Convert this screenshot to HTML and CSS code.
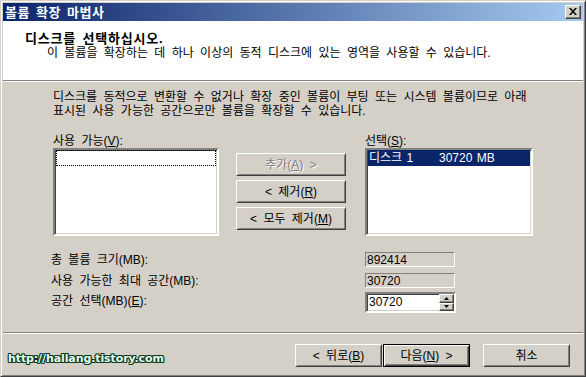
FILE: index.html
```html
<!DOCTYPE html>
<html lang="ko">
<head>
<meta charset="utf-8">
<title>볼륨 확장 마법사</title>
<link rel="stylesheet" href="styles.css">
</head>
<body>
<div class="window">
  <div class="titlebar">
    <span class="title">볼륨 확장 마법사</span>
    <span class="close"><svg width="8" height="7" viewBox="0 0 8 7"><path d="M0 0h2l2 2.4L6 0h2L5 3.5 8 7H6L4 4.6 2 7H0l3-3.5z" fill="#000"/></svg></span>
  </div>
  <div class="header">
    <div class="h-title">디스크를 선택하십시오.</div>
    <div class="h-sub">이 볼륨을 확장하는 데 하나 이상의 동적 디스크에 있는 영역을 사용할 수 있습니다.</div>
  </div>
  <div class="body">
    <p class="desc">디스크를 동적으로 변환할 수 없거나 확장 중인 볼륨이 부팅 또는 시스템 볼륨이므로 아래<br>표시된 사용 가능한 공간으로만 볼륨을 확장할 수 있습니다.</p>
    <div class="pickers">
      <div class="col">
        <div class="lbl">사용 가능(<u>V</u>):</div>
        <div class="list list-left"><div class="item focus"></div></div>
      </div>
      <div class="btns">
        <div class="btn disabled">추가(<u>A</u>) &gt;</div>
        <div class="btn">&lt; 제거(<u>R</u>)</div>
        <div class="btn">&lt; 모두 제거(<u>M</u>)</div>
      </div>
      <div class="col col-right">
        <div class="lbl">선택(<u>S</u>):</div>
        <div class="list list-right"><div class="item sel"><span class="c1">디스크 1</span><span>30720 MB</span></div></div>
      </div>
    </div>
    <div class="fields">
      <div class="frow frow1">
        <div class="flabel">총 볼륨 크기(MB):</div>
        <div class="ro">892414</div>
      </div>
      <div class="frow frow2">
        <div class="flabel">사용 가능한 최대 공간(MB):</div>
        <div class="ro">30720</div>
      </div>
      <div class="frow frow3">
        <div class="flabel">공간 선택(MB)(<u>E</u>):</div>
        <div class="spin">
          <span class="spin-val">30720</span>
          <div class="spinbtns">
            <span class="sb"><svg width="5" height="3" viewBox="0 0 5 3"><path d="M2.5 0L5 3H0z" fill="#000"/></svg></span>
            <span class="sb"><svg width="5" height="3" viewBox="0 0 5 3"><path d="M0 0h5L2.5 3z" fill="#000"/></svg></span>
          </div>
        </div>
      </div>
    </div>
  </div>
  <div class="footer">
    <div class="btn fbtn">&lt; 뒤로(<u>B</u>)</div>
    <div class="btn fbtn default">다음(<u>N</u>) &gt;</div>
    <div class="btn fbtn cancel">취소</div>
  </div>
  <div class="watermark">http://hallang.tistory.com</div>
</div>
</body>
</html>
```
FILE: styles.css
```css
* { box-sizing: border-box; }
html, body { margin: 0; padding: 0; }
body {
  background: #d4d0c8;
  font-family: "Liberation Sans", "Noto Sans CJK KR", sans-serif;
  font-size: 12px;
  color: #000;
  letter-spacing: 0;
  word-spacing: 3px;
}
u { text-decoration: underline; text-underline-offset: 1px; }

.window {
  position: relative;
  width: 586px;
  height: 377px;
  background: #d4d0c8;
  border: 1px solid;
  border-color: #d4d0c8 #404040 #404040 #d4d0c8;
  box-shadow: inset 1px 1px #fff, inset -1px -1px #808080;
  padding: 2px;
  display: flex;
  flex-direction: column;
}

.titlebar {
  height: 18px;
  background: linear-gradient(to right, #0a246a, #a6caf0);
  display: flex;
  align-items: center;
  justify-content: space-between;
  padding: 0 2px 0 2px;
}
.title {
  color: #fff;
  font-weight: bold;
  font-size: 13px;
  letter-spacing: 0.5px;
  word-spacing: 2px;
  line-height: 18px;
  padding-top: 1px;
}
.close {
  width: 16px;
  height: 14px;
  background: #d4d0c8;
  border: 1px solid;
  border-color: #fff #404040 #404040 #fff;
  box-shadow: inset -1px -1px #808080;
  display: flex;
  align-items: center;
  justify-content: center;
  padding: 0 1px 1px 0;
}
.close svg { display: block; }

.header {
  height: 60px;
  background: #fff;
  border-bottom: 1px solid #808080;
  padding: 10px 0 0 22px;
}
.h-title {
  font-weight: bold;
  font-size: 13px;
  line-height: 15px;
  letter-spacing: 0.8px;
  word-spacing: 2px;
}
.h-sub {
  line-height: 14px;
  margin: 0 0 0 22px;
}

.body {
  height: 251px;
  border-top: 1px solid #fff;
  padding: 8px 0 0 50px;
}
.desc {
  margin: 0;
  line-height: 14px;
}
.pickers {
  display: flex;
  margin-top: 16px;
}
.lbl { line-height: 14px; }
.list {
  margin-top: 0;
  height: 88px;
  background: #fff;
  border: 2px solid;
  border-color: #808080 #fff #fff #808080;
  box-shadow: inset 1px 1px #404040, inset -1px -1px #d4d0c8;
  padding: 0 1px;
}
.list-left { width: 166px; }
.list-right { width: 168px; }
.item {
  height: 16px;
  line-height: 16px;
}
.focus {
  border: 1px dotted #000;
}
.sel {
  background: #0a246a;
  color: #fff;
  display: flex;
  padding-left: 1px;
  word-spacing: 1px;
}
.c1 { width: 70px; }

.btns {
  display: flex;
  flex-direction: column;
  gap: 4px;
  margin-left: 17px;
  padding-top: 19px;
  width: 110px;
}
.col-right { margin-left: 19px; }

.btn {
  height: 23px;
  background: #d4d0c8;
  border: 1px solid;
  border-color: #fff #404040 #404040 #fff;
  box-shadow: inset 1px 1px #d4d0c8, inset -1px -1px #808080;
  display: flex;
  align-items: center;
  justify-content: center;
  line-height: 14px;
}
.btn.disabled {
  color: #808080;
  text-shadow: 1px 1px #fff;
}

.fields { margin-left: -2px; }
.frow {
  display: flex;
  align-items: center;
}
.flabel {
  width: 314px;
  line-height: 14px;
}
.frow1 { margin-top: 16px; height: 15px; }
.frow2 { margin-top: 6px; height: 15px; }
.frow3 { margin-top: 4px; height: 21px; }
.frow3 .flabel { padding-bottom: 3px; }
.ro {
  width: 90px;
  height: 15px;
  border: 1px solid;
  border-color: #808080 #fff #fff #808080;
  line-height: 14px;
  padding-left: 1px;
}
.spin {
  width: 91px;
  height: 21px;
  background: #fff;
  border: 2px solid;
  border-color: #808080 #fff #fff #808080;
  box-shadow: inset 1px 1px #404040, inset -1px -1px #d4d0c8;
  display: flex;
  justify-content: space-between;
  padding: 0 0 0 2px;
}
.spin-val { line-height: 17px; }
.spinbtns {
  width: 15px;
  display: flex;
  flex-direction: column;
}
.sb {
  flex: 1;
  background: #d4d0c8;
  border: 1px solid;
  border-color: #fff #404040 #404040 #fff;
  box-shadow: inset -1px -1px #808080;
  display: flex;
  align-items: center;
  justify-content: center;
}
.sb svg { display: block; }

.footer {
  height: 42px;
  border-top: 1px solid #808080;
  box-shadow: inset 0 1px #fff;
  display: flex;
  justify-content: flex-end;
  padding: 11px 13px 0 0;
  gap: 1px;
}
.fbtn { width: 87px; }
.default {
  border: 1px solid #000;
  box-shadow: inset 1px 1px #fff, inset -1px -1px #404040, inset 2px 2px #d4d0c8, inset -2px -2px #808080;
}
.cancel { margin-left: 12px; }

.watermark {
  position: absolute;
  left: 7px;
  top: 351px;
  font-family: "DejaVu Sans", sans-serif;
  font-weight: bold;
  font-size: 11px;
  letter-spacing: -0.1px;
  word-spacing: 0;
  line-height: 14px;
  color: #e6fff0;
  text-shadow: 1px 0 #0c3b22, -1px 0 #0c3b22, 0 1px #0c3b22, 0 -1px #0c3b22, 1px 1px #0c3b22, -1px -1px #0c3b22, 1px -1px #0c3b22, -1px 1px #0c3b22;
}
```
